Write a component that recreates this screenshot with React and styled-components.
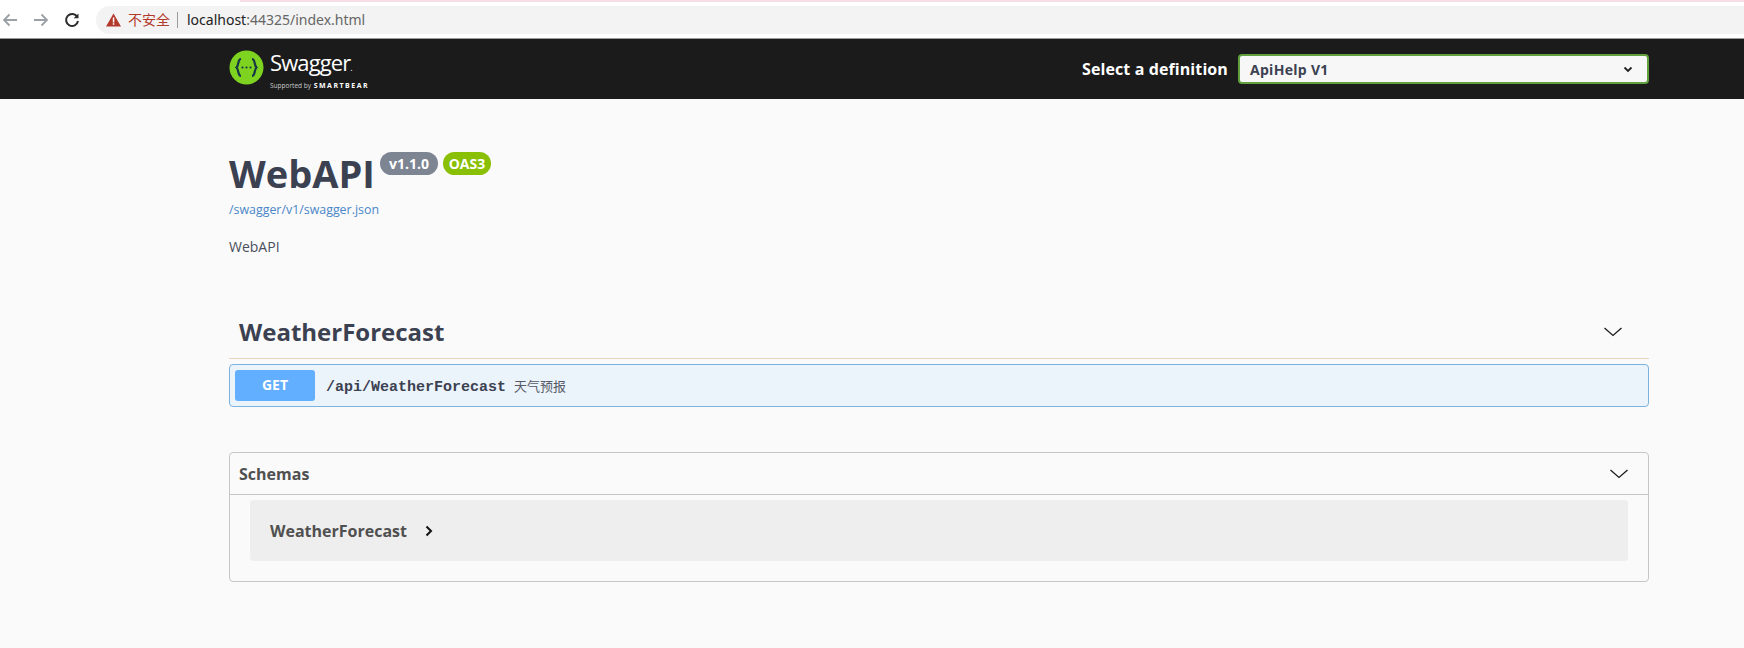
import React from 'react'
import styled, { createGlobalStyle } from 'styled-components'

const GlobalStyle = createGlobalStyle`
    html, body{
        margin: 0;
        padding: 0;
        background: #fafafa;
        font-family: "Open Sans", "Noto Sans CJK SC", sans-serif;
        color: #3b4151;
    }
`

const Chevron = ({ size = 20, stroke = 1.3 }) => (
    <svg width={size} height={size} viewBox="0 0 20 20" fill="none" stroke="#1c1c1c" strokeWidth={stroke}>
        <path d="M1.5 6 L10 13.5 L18.5 6" />
    </svg>
)

const App = () => {
    return (
        <Page>
            <GlobalStyle />
            <BrowserBar>
                <PinkStrip />
                <NavRow>
                    <NavIcon>
                        <svg width="18" height="18" viewBox="0 0 18 18" fill="none" stroke="#9aa0a6" strokeWidth="1.8">
                            <path d="M16 9 H3 M8.5 3.5 L3 9 L8.5 14.5" />
                        </svg>
                    </NavIcon>
                    <NavIcon>
                        <svg width="18" height="18" viewBox="0 0 18 18" fill="none" stroke="#9aa0a6" strokeWidth="1.8">
                            <path d="M2 9 H15 M9.5 3.5 L15 9 L9.5 14.5" />
                        </svg>
                    </NavIcon>
                    <NavIcon>
                        <svg width="18" height="18" viewBox="0 0 18 18" fill="none" stroke="#2c2c2c" strokeWidth="2">
                            <path d="M14.3 6 A6 6 0 1 0 15 10" />
                            <path d="M15.5 2.5 V7.3 H10.7 Z" fill="#2c2c2c" stroke="none" />
                        </svg>
                    </NavIcon>
                    <AddressPill>
                        <svg width="15" height="14" viewBox="0 0 15 14">
                            <path d="M7.5 0.5 L15 13.5 H0 Z" fill="#b3392c" />
                            <rect x="6.8" y="4.5" width="1.5" height="5" fill="#fff" />
                            <rect x="6.8" y="10.2" width="1.5" height="1.6" fill="#fff" />
                        </svg>
                        <Insecure>不安全</Insecure>
                        <UrlDivider />
                        <Url>localhost<span>:44325/index.html</span></Url>
                    </AddressPill>
                </NavRow>
            </BrowserBar>

            <Topbar>
                <LogoLink>
                    <svg width="35" height="35" viewBox="0 0 35 35">
                        <circle cx="17.5" cy="17.5" r="17" fill="#7ed321" />
                        <path d="M12 9 C8.5 9 10 15.5 7.5 17.5 C10 19.5 8.5 26 12 26" fill="none" stroke="#173646" strokeWidth="2.2" />
                        <path d="M23 9 C26.5 9 25 15.5 27.5 17.5 C25 19.5 26.5 26 23 26" fill="none" stroke="#173646" strokeWidth="2.2" />
                        <circle cx="13.5" cy="17.5" r="1.1" fill="#173646" />
                        <circle cx="17.5" cy="17.5" r="1.1" fill="#173646" />
                        <circle cx="21.5" cy="17.5" r="1.1" fill="#173646" />
                    </svg>
                    <LogoText>
                        <LogoName>Swagger<small>.</small></LogoName>
                        <LogoSub>Supported by <b>SMARTBEAR</b></LogoSub>
                    </LogoText>
                </LogoLink>
                <DefinitionWrap>
                    <DefinitionLabel>Select a definition</DefinitionLabel>
                    <DefinitionSelect>
                        <span>ApiHelp V1</span>
                        <svg width="12" height="12" viewBox="0 0 12 12" fill="none" stroke="#222" strokeWidth="1.8">
                            <path d="M2.5 4.5 L6 8 L9.5 4.5" />
                        </svg>
                    </DefinitionSelect>
                </DefinitionWrap>
            </Topbar>

            <Content>
                <Info>
                    <TitleRow>
                        <Title>WebAPI</Title>
                        <Badge color="#7d8492" width="58px">v1.1.0</Badge>
                        <Badge color="#89bf04" width="48px">OAS3</Badge>
                    </TitleRow>
                    <SpecLink>/swagger/v1/swagger.json</SpecLink>
                    <Description>WebAPI</Description>
                </Info>

                <TagHeader>
                    <TagName>WeatherForecast</TagName>
                    <Chevron />
                </TagHeader>
                <OpBlock>
                    <MethodBadge>GET</MethodBadge>
                    <OpPath>/api/WeatherForecast</OpPath>
                    <OpSummary>天气预报</OpSummary>
                </OpBlock>

                <SchemasBox>
                    <SchemasHeader>
                        <SchemasTitle>Schemas</SchemasTitle>
                        <Chevron />
                    </SchemasHeader>
                    <ModelRow>
                        <ModelName>WeatherForecast</ModelName>
                        <svg width="10" height="12" viewBox="0 0 10 12" fill="none" stroke="#111" strokeWidth="2">
                            <path d="M2.5 1.5 L7 6 L2.5 10.5" />
                        </svg>
                    </ModelRow>
                </SchemasBox>
            </Content>
        </Page>
    )
}

const Page = styled.div`
    width: 1744px;
    height: 648px;
    overflow: hidden;
`

const BrowserBar = styled.div`
    height: 38px;
    background: #fff;
    border-bottom: 1px solid #9a9a9a;
    box-sizing: content-box;
`

const PinkStrip = styled.div`
    height: 2px;
    margin-left: 240px;
    background: #f6dfe4;
`

const NavRow = styled.div`
    display: flex;
    align-items: center;
    height: 36px;
    box-sizing: border-box;
`

const NavIcon = styled.div`
    width: 32px;
    display: flex;
    justify-content: center;
    margin-left: -1px;
    &:first-child{
        margin-left: -6px;
    }
`

const AddressPill = styled.div`
    flex: 1;
    height: 28px;
    margin-left: 8px;
    padding-left: 10px;
    display: flex;
    align-items: center;
    background: #f3f3f3;
    border-radius: 14px 0 0 14px;
`

const Insecure = styled.span`
    margin: 0 0 2px 7px;
    font-size: 14px;
    color: #b3392c;
    font-family: "Noto Sans CJK SC", sans-serif;
`

const UrlDivider = styled.span`
    width: 1px;
    height: 16px;
    margin: 0 9px 0 7px;
    background: #9b9b9b;
`

const Url = styled.span`
    margin-bottom: 2px;
    font-size: 14px;
    color: #222;
    font-family: "Noto Sans", sans-serif;
    span{
        color: #666;
    }
`

const Topbar = styled.div`
    height: 60px;
    padding: 0 95px 0 229px;
    display: flex;
    align-items: center;
    justify-content: space-between;
    background: #1b1b1b;
`

const LogoLink = styled.div`
    display: flex;
    align-items: center;
    gap: 6px;
    margin-bottom: 4px;
`

const LogoText = styled.div`
    display: flex;
    flex-direction: column;
    margin-top: 4px;
    color: #fff;
`

const LogoName = styled.div`
    font-size: 22px;
    line-height: 26px;
    letter-spacing: -0.9px;
    small{
        font-size: 9px;
    }
`

const LogoSub = styled.div`
    font-size: 6.5px;
    line-height: 9px;
    margin-top: 0;
    color: #ccc;
    white-space: nowrap;
    b{
        margin-left: 1px;
        color: #fff;
        font-size: 7px;
        letter-spacing: 1.5px;
    }
`

const DefinitionWrap = styled.div`
    display: flex;
    align-items: center;
    gap: 10px;
`

const DefinitionLabel = styled.span`
    font-size: 16px;
    font-weight: 700;
    letter-spacing: 0.1px;
    color: #fff;
`

const DefinitionSelect = styled.div`
    width: 411px;
    height: 30px;
    padding: 0 13px 0 10px;
    box-sizing: border-box;
    display: flex;
    align-items: center;
    justify-content: space-between;
    background: #f7f7f7;
    border: 2px solid #62a03f;
    border-radius: 4px;
    font-size: 14px;
    font-weight: 700;
    letter-spacing: 0.3px;
    color: #3b4151;
`

const Content = styled.div`
    padding: 0 95px 0 229px;
`

const Info = styled.div`
    padding-top: 50px;
`

const TitleRow = styled.div`
    display: flex;
    align-items: flex-start;
    height: 56px;
`

const Title = styled.h2`
    margin: 1px 5px 0 0;
    font-size: 38px;
    line-height: 46px;
    font-weight: 700;
    color: #3b4151;
`

const Badge = styled.span`
    width: ${({ width }) => width};
    height: 23px;
    margin: 3px 5px 0 0;
    display: flex;
    align-items: center;
    justify-content: center;
    border-radius: 12px;
    background: ${({ color }) => color};
    color: #fff;
    font-size: 14px;
    font-weight: 700;
`

const SpecLink = styled.a`
    display: block;
    margin-top: -3px;
    font-size: 12.4px;
    line-height: 16px;
    color: #4a86c8;
`

const Description = styled.p`
    margin: 19px 0 0;
    font-size: 14px;
    line-height: 19px;
    color: #4a4f5c;
`

const TagHeader = styled.div`
    height: 58px;
    margin-top: 45px;
    padding: 4px 26px 0 10px;
    box-sizing: border-box;
    display: flex;
    align-items: center;
    justify-content: space-between;
    border-bottom: 1px solid #e6d6bb;
`

const TagName = styled.h3`
    margin: 0;
    font-size: 24px;
    font-weight: 700;
    color: #3b4151;
`

const OpBlock = styled.div`
    height: 43px;
    margin-top: 5px;
    padding: 0 5px;
    box-sizing: border-box;
    display: flex;
    align-items: center;
    background: #ebf3fb;
    border: 1px solid #7ab3e0;
    border-radius: 4px;
`

const MethodBadge = styled.span`
    width: 80px;
    height: 31px;
    display: flex;
    align-items: center;
    justify-content: center;
    background: #61affe;
    border-radius: 3px;
    color: #fff;
    font-size: 14px;
    font-weight: 700;
    padding-bottom: 2px;
    box-sizing: border-box;
`

const OpPath = styled.span`
    margin-left: 11px;
    padding-top: 3px;
    font-family: "Liberation Mono", monospace;
    font-size: 15px;
    font-weight: 700;
    color: #3b4151;
`

const OpSummary = styled.span`
    margin-left: 8px;
    font-family: "Noto Sans CJK SC", sans-serif;
    font-size: 13px;
    color: #555a66;
`

const SchemasBox = styled.section`
    height: 130px;
    margin-top: 45px;
    box-sizing: border-box;
    border: 1px solid #c6c6c6;
    border-radius: 4px;
`

const SchemasHeader = styled.div`
    height: 42px;
    padding: 0 19px 0 9px;
    box-sizing: border-box;
    display: flex;
    align-items: center;
    justify-content: space-between;
    border-bottom: 1px solid #c6c6c6;
`

const SchemasTitle = styled.h4`
    margin: 0;
    font-size: 16px;
    font-weight: 700;
    color: #505050;
`

const ModelRow = styled.div`
    height: 61px;
    margin: 5px 20px 0;
    padding-left: 20px;
    display: flex;
    align-items: center;
    gap: 17px;
    background: #eee;
    border-radius: 4px;
`

const ModelName = styled.span`
    font-size: 16px;
    font-weight: 700;
    color: #505050;
`

export default App
